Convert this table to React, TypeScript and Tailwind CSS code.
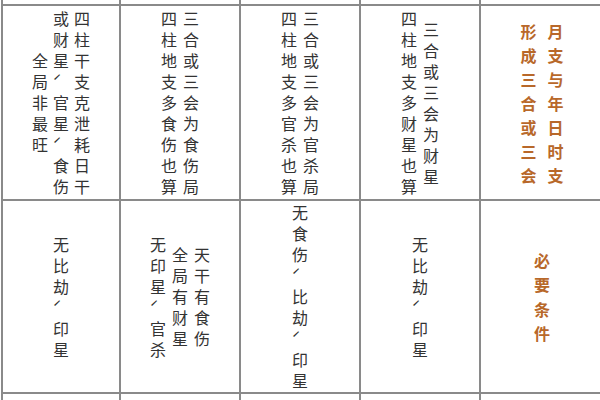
const line = "border-[#8a8a8a]";

type ColProps = { text: string; cell: string };

// one vertical line of characters, one per line
const Col = ({ text, cell }: ColProps) => (
    <span className={`block w-[21px] whitespace-pre text-center ${cell}`}>
        {Array.from(text)
            .map((ch) => (ch === "，" ? "ˊ\u2002" : ch))
            .join("\n")}
    </span>
);

type CellProps = { cols: string[]; orange?: boolean; gap?: string; cell?: string; first?: boolean };

const Cell = ({ cols, orange, gap = "gap-0", cell, first }: CellProps) => (
    <div
        className={`flex flex-row-reverse items-center justify-center border-r-2 border-b-2 ${line} ${
            first ? "border-l-2" : ""
        } ${gap} ${orange ? "text-[#b8682a] font-bold" : "text-[#333]"}`}
    >
        {cols.map((c, i) => (
            <Col key={i} text={c} cell={cell ?? "leading-[21px] text-[16px]"} />
        ))}
    </div>
);

const Edge = ({ first }: { first?: boolean }) => (
    <div className={`border-r-2 border-b-2 ${line} ${first ? "border-l-2" : ""}`} />
);

export default function App() {
    return (
        <div className="w-[600px] h-[400px] overflow-hidden bg-white font-['Noto_Sans_CJK_SC',sans-serif]">
            <div className="ml-[1px] grid grid-cols-[120px_120px_120px_120px_124px] grid-rows-[6px_195px_193px_20px]">
                {/* cut-off row above */}
                <Edge first />
                <Edge />
                <Edge />
                <Edge />
                <Edge />

                {/* conditions */}
                <Cell first cols={["四柱干支克泄耗日干", "或财星，官星，食伤", "全局非最旺"]} />
                <Cell gap="gap-[1px]" cols={["三合或三会为食伤局", "四柱地支多食伤也算"]} />
                <Cell gap="gap-[1px]" cols={["三合或三会为官杀局", "四柱地支多官杀也算"]} />
                <Cell gap="gap-[1px]" cols={["三合或三会为财星", "四柱地支多财星也算"]} />
                <Cell
                    orange
                    gap="gap-[6px]"
                    cell="leading-[24px] text-[16px]"
                    cols={["月支与年日时支", "形成三合或三会"]}
                />

                {/* restrictions */}
                <Cell first cols={["无比劫，印星"]} />
                <Cell gap="gap-[1px]" cols={["天干有食伤", "全局有财星", "无印星，官杀"]} />
                <Cell cols={["无食伤，比劫，印星"]} />
                <Cell cols={["无比劫，印星"]} />
                <Cell orange cell="leading-[24.5px] text-[16px]" cols={["必要条件"]} />

                {/* next row, cut off */}
                <Edge first />
                <Edge />
                <Edge />
                <Edge />
                <Edge />
            </div>
        </div>
    );
}
